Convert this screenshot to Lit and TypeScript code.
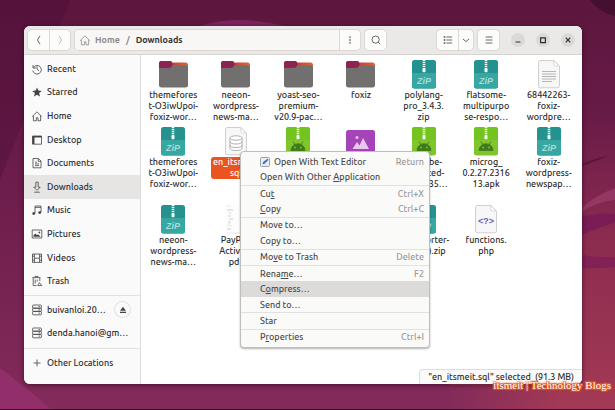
import { LitElement, html, svg, css, nothing } from "lit";
import { customElement } from "lit/decorators.js";
import { classMap } from "lit/directives/class-map.js";

type Kind = "folder" | "zip" | "text" | "db" | "apk" | "image" | "pdf" | "php";
interface FileItem { kind: Kind; name: string; selected?: boolean }
interface MenuItem { before: string; key?: string; after?: string; accel?: string; icon?: boolean; active?: boolean }

const FILES: (FileItem | null)[] = [
  { kind: "folder", name: "themefores\nt-O3iwUpoi-\nfoxiz-wor…" },
  { kind: "folder", name: "neeon-\nwordpress-\nnews-ma…" },
  { kind: "folder", name: "yoast-seo-\npremium-\nv20.9-pac…" },
  { kind: "folder", name: "foxiz" },
  { kind: "zip", name: "polylang-\npro_3.4.3.\nzip" },
  { kind: "zip", name: "flatsome-\nmultipurpo\nse-respo…" },
  { kind: "text", name: "68442263-\nfoxiz-\nwordpre…" },
  { kind: "zip", name: "themefores\nt-O3iwUpoi-\nfoxiz-wor…" },
  { kind: "db", name: "en_itsmeit.\nsql", selected: true },
  { kind: "apk", name: "" },
  { kind: "image", name: "" },
  { kind: "apk", name: "youtube-\nunrooted-\nv17.33.35…" },
  { kind: "apk", name: "microg_\n0.2.27.2316\n13.apk" },
  { kind: "zip", name: "foxiz-\nwordpress-\nnewspap…" },
  { kind: "zip", name: "neeon-\nwordpress-\nnews-ma…" },
  { kind: "pdf", name: "PayPal-\nActivity.\npdf" },
  null,
  null,
  { kind: "zip", name: "wpimporter-\nv2.0 (1).zip" },
  { kind: "php", name: "functions.\nphp" },
];

const MENU: MenuItem[][] = [
  [
    { before: "Open With Text Editor", accel: "Return", icon: true },
    { before: "Open With Other ", key: "A", after: "pplication" },
  ],
  [
    { before: "Cu", key: "t", accel: "Ctrl+X" },
    { before: "", key: "C", after: "opy", accel: "Ctrl+C" },
  ],
  [{ before: "Move to…" }, { before: "Copy to…" }],
  [{ before: "Mo", key: "v", after: "e to Trash", accel: "Delete" }],
  [
    { before: "Rena", key: "m", after: "e…", accel: "F2" },
    { before: "C", key: "o", after: "mpress…", active: true },
    { before: "Send to…" },
  ],
  [{ before: "Star" }],
  [{ before: "P", key: "r", after: "operties", accel: "Ctrl+I" }],
];

const PLACES: [string, string][] = [
  ["recent", "Recent"], ["star", "Starred"], ["home", "Home"], ["desktop", "Desktop"],
  ["doc", "Documents"], ["down", "Downloads"], ["music", "Music"], ["pic", "Pictures"],
  ["video", "Videos"], ["trash", "Trash"],
];

const glyphs: Record<string, unknown> = {
  recent: svg`<path d="M2 2v3h3M2.300 4.600A4.300 4.300 0 1 1 1.800 7.500M6 3.200v3l2 1.600"/>`,
  star: svg`<path class="solid" d="M6 1.400l1.300 3.200 3.500.3-2.700 2.200.9 3.500L6 8.700l-3 1.900.9-3.500L1.200 4.900l3.500-.3z"/>`,
  home: svg`<path d="M1.200 6.600L6 1.800l4.800 4.800M2.400 5.800v5h3v-3h1.600v3h2.600v-5"/>`,
  desktop: svg`<path d="M1.500 2h9v8.200h-9z"/><path class="solid" d="M1.500 2h9v1.400h-9zM1.500 2h2v8h-2z"/>`,
  doc: svg`<path d="M2 1.500h5.500L10 4v6.800H2zM7.200 1.700v2.600H10M4 5.200h2M4 6.900h4M4 8.600h4"/>`,
  down: svg`<path d="M4.800 1.200h2.400v5h2L6 9.400 2.800 6.200h2zM3.200 11.200h5.600"/>`,
  music: svg`<path d="M4 9.200V2h6v6.200M4 3.400h6"/><path class="solid" d="M4.200 8.200v1.400a1.500 1.300 0 1 1-1.500-1.300zM10.200 7.200v1.400a1.500 1.300 0 1 1-1.500-1.300z"/>`,
  pic: svg`<path d="M1.200 2h9.600v8H1.200z"/><path class="solid" d="M2.400 8.800V7.600l2-2 1.600 1.600 1-.9 2.600 2.500zM8.400 3.400a.9.9 0 1 1-.1 0z"/>`,
  video: svg`<path d="M1.500 2h9v8.400h-9zM3.400 2v8.400M8.600 2v8.400M3.400 6.200h5.200M1.500 4.200h1.900M1.500 8.200h1.900M8.600 4.200h1.900M8.600 8.200h1.900"/>`,
  trash: svg`<path d="M1.400 2.600h8M4 2.400v-1h3v1M2.200 3v7.600h3.400M8.800 3v3M4.200 4.600v4M6.200 4.600v2M6.800 10.600l1.600-3 2.400 3z"/>`,
  server: svg`<rect x="1.600" y="1" width="8.800" height="3.200" rx=".8"/><rect x="1.600" y="4.200" width="8.800" height="3.200" rx=".8"/><rect x="1.600" y="7.400" width="8.800" height="3.400" rx=".8"/><path d="M7.500 2.600H9M7.500 5.800H9M7.500 9.100H9"/>`,
  plus: svg`<path d="M6 2.500v7M2.500 6h7"/>`,
  eject: svg`<path class="solid" d="M6 2.800l3 4H3zM3 7.800h6v1.200H3z"/>`,
  back: svg`<path d="M7 1.800Q5.400 4 4.600 6 5.400 8 7 10.200"/>`,
  fwd: svg`<path d="M5 1.800Q6.600 4 7.400 6 6.600 8 5 10.200"/>`,
  dots: svg`<path class="solid" d="M5.300 2.400h1.400v1.400H5.300zM5.300 5.300h1.400v1.400H5.300zM5.300 8.200h1.400v1.400H5.300z"/>`,
  search: svg`<circle cx="5.600" cy="5.600" r="3.600"/><path d="M8.200 8.200l2 2"/>`,
  list: svg`<path d="M4.400 3h5.800M4.400 6h5.800M4.400 9h5.800"/><path class="solid" d="M1.800 2.200h1.500v1.600H1.800zM1.800 5.200h1.500v1.600H1.800zM1.800 8.200h1.500v1.600H1.800z"/>`,
  chev: svg`<path d="M3 5l3 2.600L9 5"/>`,
  menu: svg`<path d="M2.600 3h6.800M2.600 6h6.800M2.600 9h6.800"/>`,
  min: svg`<path class="bold" d="M3.600 8h4.800"/>`,
  max: svg`<path class="bold" d="M3.600 3.800h4.800v4.800H3.600z"/>`,
  close: svg`<path class="bold" d="M3.700 3.700l4.600 4.600M8.300 3.700L3.700 8.300"/>`,
};
const icon = (n: string) => html`<svg class="glyph" viewBox="0 0 12 12" aria-hidden="true">${glyphs[n]}</svg>`;

const zipper = svg`<path d="M12 0v9" stroke="#f2fbfa" stroke-width="2.600" stroke-dasharray="1.200 .8"/><rect x="10.500" y="8.500" width="3" height="3.800" rx=".8" fill="#f2fbfa"/>`;
const page = svg`<path d="M3 .5h13.800l5.700 5.700v19.600a2 2 0 0 1-2 2H3.500a2 2 0 0 1-2-2V2.500a2 2 0 0 1 2-2z" fill="#f7f7f7" stroke="#cfcfcf"/><path d="M16.800.8v3.600a1.500 1.500 0 0 0 1.500 1.500h3.800z" fill="#fff" stroke="#cfcfcf" stroke-width=".8"/>`;
const art: Record<Kind, unknown> = {
  folder: html`<svg class="art wide" viewBox="0 0 29 28" aria-hidden="true">
    <defs><linearGradient id="flap"><stop offset="0" stop-color="#8c2350"/><stop offset=".5" stop-color="#c4453f"/><stop offset="1" stop-color="#e0662f"/></linearGradient></defs>
    <path d="M0 3.500A2.500 2.500 0 0 1 2.500 1H11q1 0 1.600.8l.6.8h13.300A2.500 2.500 0 0 1 29 5.100V12H0z" fill="url(#flap)"/>
    <path d="M0 8h10.500q1 0 1.700-.9l.9-1.200q.5-.7 1.400-.7h12A2.500 2.500 0 0 1 29 7.700v17.300a2.500 2.500 0 0 1-2.500 2.500h-24A2.500 2.500 0 0 1 0 25z" fill="#71706f"/>
    <path d="M0 3.500A2.500 2.500 0 0 1 2.500 1H11q1 0 1.600.8l1.200 2.400-1.500 2.600q-.8 1-1.700 1H0z" fill="#8c2350"/></svg>`,
  zip: html`<svg class="art" viewBox="0 0 24 29" aria-hidden="true"><rect width="24" height="28.500" rx="2.500" fill="#25928f"/><path d="M0 13h24v13a2.500 2.500 0 0 1-2.500 2.500h-19A2.500 2.500 0 0 1 0 26z" fill="#36a7a2"/>${zipper}
    <text class="zip" x="12" y="24" text-anchor="middle">ZiP</text></svg>`,
  text: html`<svg class="art" viewBox="0 0 24 29" aria-hidden="true">${page}<path d="M5 11.500h14M5 14h14M5 16.500h14M5 19h14M5 21.500h10" stroke="#b5b5b5"/></svg>`,
  db: html`<svg class="art" viewBox="0 0 24 29" aria-hidden="true">${page}<path d="M6 11v10q0 2.500 6 2.500t6-2.500V11M6 14.500q0 2.500 6 2.500t6-2.500M6 18q0 2.500 6 2.500t6-2.500" fill="#fff" stroke="#b0b0b0"/><ellipse cx="12" cy="11" rx="6" ry="2.200" fill="#fff" stroke="#b0b0b0"/></svg>`,
  apk: html`<svg class="art" viewBox="0 0 24 29" aria-hidden="true"><rect width="24" height="28.500" rx="2.500" fill="#7fc52b"/><path d="M0 2.500A2.500 2.500 0 0 1 2.500 0h19A2.500 2.500 0 0 1 24 2.500V13H0z" fill="#74c41f"/>${zipper}
    <path d="M5 23.500a7 6.800 0 0 1 14 0zM7 14.500l2 3.500M17 14.500L15 18" fill="#3f7a1c" stroke="#3f7a1c" stroke-width=".8"/><circle cx="9" cy="20.500" r=".9" fill="#7fc52b"/><circle cx="15" cy="20.500" r=".9" fill="#7fc52b"/></svg>`,
  image: html`<svg class="art wide" viewBox="0 0 29 28" aria-hidden="true"><rect y="3" width="29" height="25" rx="2.500" fill="#a544b8"/><path d="M6.500 22l4.500-7 2.500 3.500L17 11l6 11z" fill="#e9c8f0"/><circle cx="11" cy="10.500" r="1.500" fill="#e9c8f0"/></svg>`,
  pdf: html`<svg class="art" viewBox="0 0 24 29" aria-hidden="true"><path d="M1 0h22v28H1z" fill="#fdfdfd"/><path d="M3 1h4M3 19h4M3 21h5M3 28h14" stroke="#ddd" stroke-width=".6"/><path d="M3 5h6M5 8h2M4 11h3M5 14h4M4 17h3M3 24h4" stroke="#bbb" stroke-width=".7"/></svg>`,
  php: html`<svg class="art" viewBox="0 0 24 29" aria-hidden="true">${page}<text class="code" x="12" y="19" text-anchor="middle">&lt;?&gt;</text></svg>`,
};

@customElement("app-root")
export class AppRoot extends LitElement {
  static styles = css`
    :host { display: block; font: 500 9px/12px Ubuntu, "Noto Sans", sans-serif; color: #2e2e2e; }
    * { box-sizing: border-box; }
    button { font: inherit; color: inherit; border: 0; background: none; padding: 0; margin: 0; display: flex; align-items: center; justify-content: center; }
    .glyph { width: 12px; height: 12px; flex: none; fill: none; stroke: currentColor; stroke-width: .8; display: block; }
    .glyph .solid { fill: currentColor; stroke: none; }
    .glyph .bold { stroke-width: 1.2; }
    .desk { position: relative; display: flex; min-height: 100vh; padding: 26px 33px 26px 24px; background: #64193f; overflow: hidden; }
    .wall { position: absolute; inset: 0; width: 100%; height: 100%; }
    .frame { position: relative; flex: 1; min-width: 0; display: flex; border-radius: 6px; box-shadow: 0 1px 5px rgba(30, 0, 22, .6); }
    .window { flex: 1; min-width: 0; display: flex; flex-direction: column; background: #fff; border-radius: 6px; overflow: hidden; }
    header { display: flex; align-items: center; height: 29px; padding: 0 7px 0 4px; background: #ebe9e8; border-bottom: 1px solid #d6d3d1; }
    .group { display: flex; height: 20px; background: #fcfcfb; border-radius: 4px; box-shadow: 0 0 0 1px #dad7d5; overflow: hidden; color: #444; }
    .group button { width: 21px; }
    .group button + button, .group .path + button { border-left: 1px solid #dad7d5; }
    .group button:disabled { color: #aaa; }
    .bar { flex: 1; min-width: 0; margin: 0 5px; }
    .path { flex: 1; min-width: 0; display: flex; align-items: center; gap: 6px; padding-left: 4px; font-weight: 700; color: #8d8d8d; background: #f8f7f6; }
    .path a { display: flex; align-items: center; gap: 4px; color: inherit; text-decoration: none; }
    .path .here { color: #333; }
    .views { margin: 0 5px 0 51px; }
    .views .narrow { width: 15px; }
    .controls { display: flex; gap: 11px; margin-left: 12px; }
    .controls button { width: 14px; height: 14px; border-radius: 50%; background: #dcdad8; }
    .body { flex: 1; display: flex; min-height: 0; }
    nav { flex: none; width: 117px; background: #fafafa; border-right: 1px solid #dfdddb; padding-top: 2px; }
    .places { display: flex; flex-direction: column; height: 236px; margin: 0 0 2px; padding: 0; list-style: none; color: #2b2b2b; }
    .places.pair { height: 47px; margin: 2px 0 3px; }
    .places.one { height: 24px; margin: 2px 0; }
    .places li { flex: 1; display: flex; align-items: center; min-height: 0; }
    .places .current { align-self: stretch; background: #e6e5e4; }
    .places a { flex: 1; display: flex; align-items: center; gap: 4px; padding-left: 7px; color: inherit; text-decoration: none; white-space: nowrap; }
    .places .glyph { color: #444; }
    .eject { flex: none; width: 17px; height: 17px; margin-right: 9px; border-radius: 50%; box-shadow: inset 0 0 0 1px #e4e2e0; }
    .line { height: 1px; margin: 0; border: 0; background: #e3e1df; }
    main { position: relative; flex: 1; min-width: 0; background: #fff; }
    .files { display: grid; grid-template-columns: repeat(7, minmax(0, 1fr)); grid-template-rows: 67px 78px; padding: 5px 2px 0 1px; }
    .file { display: flex; flex-direction: column; align-items: center; color: #2b2b2b; margin: 0; }
    .art { width: 24px; height: 29px; display: block; }
    .art.wide { width: 29px; height: 28px; margin-bottom: 1px; }
    .art .zip { font: italic 700 9px "Liberation Sans", sans-serif; fill: #a9dcd9; }
    .art .code { font: 700 9px "Liberation Mono", monospace; fill: #6a5fc4; }
    .name { margin-top: 1px; white-space: pre; text-align: center; line-height: 11px; }
    .name.selected { background: #e9541f; color: #fff; border-radius: 3px; padding: 0 2px; }
    .menu { position: absolute; left: 99px; top: 96px; width: 190px; height: 197px; display: flex; flex-direction: column; padding: 2px 0; background: #fafaf9; border: 1px solid #c0bebc; border-radius: 4px; box-shadow: 0 1px 2px rgba(0, 0, 0, .3); color: #4a4a4a; }
    .menu button { flex: 1; min-height: 0; justify-content: flex-start; gap: 4px; padding: 0 5px 0 19px; white-space: nowrap; }
    .menu .active { background: #dcdbda; }
    .menu .line { flex: none; }
    .menu kbd { margin-left: auto; font: inherit; color: #999; }
    .menu .app { width: 10px; height: 10px; flex: none; }
    .status { position: absolute; right: 0; bottom: 0; height: 15px; padding: 1px 8px 0; background: #fafafa; border: 1px solid #e0dedc; border-width: 1px 0 0 1px; border-top-left-radius: 4px; white-space: pre; }
    .mark { position: absolute; right: 4px; bottom: 18px; font: 11px/14px "Liberation Serif", serif; color: #fff; text-shadow: 1px 1px 1px #ee5a14, -1px 1px 1px #ee5a14, 1px -1px 1px #ee5a14, -1px -1px 1px #ee5a14, 0 0 2px #ee5a14, 0 0 3px #ee5a14; }
  `;

  private wall() {
    return html`<svg class="wall" viewBox="0 0 615 410" preserveAspectRatio="none" aria-hidden="true">
      <defs>
        <linearGradient id="base" x2="0" y2="1"><stop offset="0" stop-color="#5c173e"/><stop offset=".4" stop-color="#6b1c4a"/><stop offset="1" stop-color="#832b5a"/></linearGradient>
        <linearGradient id="warm" x2="0" y2="1"><stop offset="0" stop-color="#96304f" stop-opacity="0"/><stop offset=".5" stop-color="#96304f" stop-opacity=".8"/><stop offset="1" stop-color="#a33a55"/></linearGradient>
        <linearGradient id="fade"><stop offset="0" stop-color="#832b5a"/><stop offset="1" stop-color="#832b5a" stop-opacity="0"/></linearGradient>
      </defs>
      <path d="M0 0h615v410H0z" fill="url(#base)"/>
      <path d="M0 0h70L0 180z" fill="#4c1038" opacity=".4"/>
      <path d="M200 26q35-12 85 0z" fill="#7b2460"/>
      <path d="M590 0h25v16q-16-4-25-16z" fill="#451030"/>
      <path d="M450 110h165v300H450z" fill="url(#warm)"/>
      <path d="M450 385h110v25H450z" fill="url(#fade)"/>
      <path d="M582 164q14-6 26-8-14 6-26 10z" fill="#4a1238" opacity=".7"/>
      <path d="M582 208q12-12 33-20v12q-20 2-33 12z" fill="#a8477a" opacity=".5"/>
      <path d="M582 217q18-5 33-3v9q-14 3-33 12z" fill="#76185a" opacity=".75"/>
      <path d="M582 255q18 3 33 2v10q-18 2-33 1z" fill="#7a1d58" opacity=".7"/>
      <path d="M0 368q24 18 52 42H0z" fill="#922e69"/>
      <path d="M0 409h615v1H0z" fill="#3a0f2b"/>
    </svg>`;
  }

  private place([glyph, label]: [string, string]) {
    const here = label === "Downloads";
    return html`<li class=${classMap({ current: here })}><a href="#" aria-current=${here ? "page" : nothing}>${icon(glyph)}<span>${label}</span></a></li>`;
  }

  private menuItem(m: MenuItem) {
    return html`<button role="menuitem" class=${classMap({ active: !!m.active })}>
      ${m.icon ? html`<svg class="app" viewBox="0 0 10 10" aria-hidden="true"><rect x=".5" y=".5" width="9" height="9" rx="1" fill="#e9edf2" stroke="#9aa0a8"/><path d="M2.500 7.500l.7-2.500L7.500 1.800l1 1L5 6.300z" fill="#2f6fc0"/></svg>` : nothing}
      <span>${m.before}${m.key ? html`<u>${m.key}</u>` : nothing}${m.after ?? nothing}</span>
      ${m.accel ? html`<kbd>${m.accel}</kbd>` : nothing}
    </button>`;
  }

  render() {
    return html`<div class="desk">
      ${this.wall()}
      <div class="frame"><div class="window">
        <header>
          <div class="group"><button aria-label="Back">${icon("back")}</button><button aria-label="Forward" disabled>${icon("fwd")}</button></div>
          <div class="group bar">
            <div class="path"><a href="#">${icon("home")}Home</a><span>/</span><a class="here" href="#">Downloads</a></div>
            <button aria-label="Folder menu">${icon("dots")}</button>
          </div>
          <div class="group"><button aria-label="Search">${icon("search")}</button></div>
          <div class="group views"><button aria-label="List view">${icon("list")}</button><button class="narrow" aria-label="View options">${icon("chev")}</button></div>
          <div class="group"><button aria-label="Main menu">${icon("menu")}</button></div>
          <div class="controls">
            <button aria-label="Minimize">${icon("min")}</button><button aria-label="Maximize">${icon("max")}</button><button aria-label="Close">${icon("close")}</button>
          </div>
        </header>
        <div class="body">
          <nav>
            <ul class="places">${PLACES.map((p) => this.place(p))}</ul>
            <hr class="line" />
            <ul class="places pair">
              <li><a href="#">${icon("server")}<span>buivanloi.20…</span></a><button class="eject" aria-label="Eject">${icon("eject")}</button></li>
              <li><a href="#">${icon("server")}<span>denda.hanoi@gm…</span></a></li>
            </ul>
            <hr class="line" />
            <ul class="places one"><li><a href="#">${icon("plus")}<span>Other Locations</span></a></li></ul>
          </nav>
          <main>
            <div class="files">
              ${FILES.map((f) => f
                ? html`<figure class="file">${art[f.kind]}<figcaption class=${classMap({ name: true, selected: !!f.selected })}>${f.name}</figcaption></figure>`
                : html`<span></span>`)}
            </div>
            <div class="menu" role="menu">
              ${MENU.map((g, i) => html`${i ? html`<hr class="line" />` : nothing}${g.map((m) => this.menuItem(m))}`)}
            </div>
            <div class="status">"en_itsmeit.sql" selected  (91.3 MB)</div>
          </main>
        </div>
      </div></div>
      <div class="mark">itsmeit | Technology Blogs</div>
    </div>`;
  }
}
